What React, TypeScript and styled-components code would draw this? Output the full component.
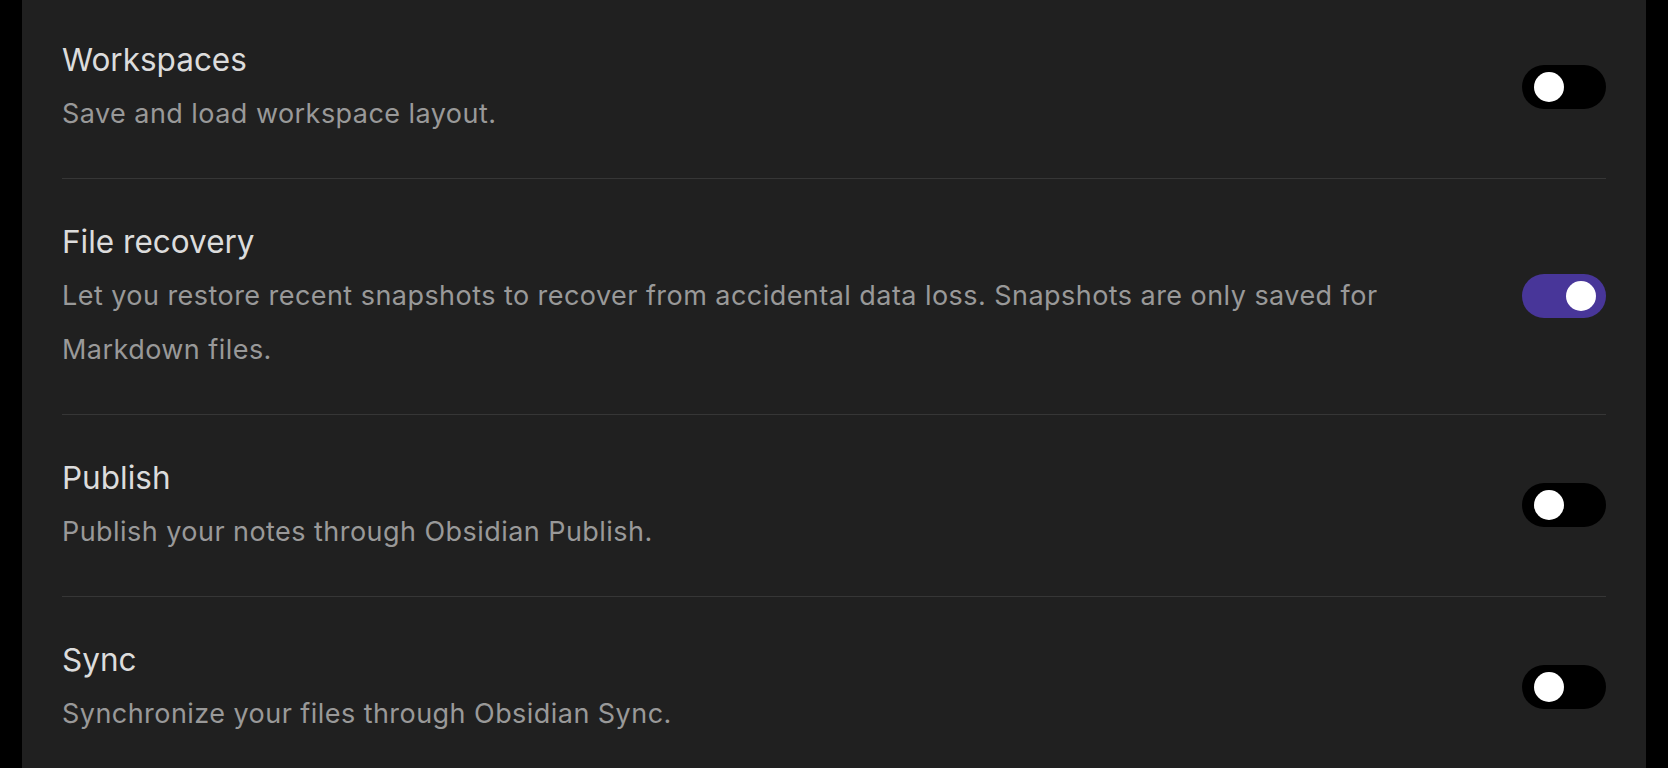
import React, { useState } from "react";
import styled, { createGlobalStyle } from "styled-components";

const GlobalStyle = createGlobalStyle`
  html, body {
    margin: 0;
    padding: 0;
    background: #000;
    height: 100%;
    overflow: hidden;
  }
  #root {
    height: 100%;
  }
`;

const Screen = styled.div`
  display: flex;
  justify-content: center;
  height: 768px;
  background: #000;
`;

const Panel = styled.div`
  width: 1624px;
  height: 100%;
  background: #202020;
  padding: 0 40px;
  box-sizing: border-box;
  overflow: hidden;
  font-family: Inter, "Noto Sans", sans-serif;
`;

const List = styled.div`
  display: flex;
  flex-direction: column;
`;

const Item = styled.div`
  display: flex;
  align-items: center;
  padding: 42px 0 37px;
  border-top: 1px solid #363636;

  &:first-child {
    border-top: none;
    padding-top: 39px;
  }
`;

const Info = styled.div`
  flex: 1 1 auto;
  margin-right: 40px;
  display: flex;
  flex-direction: column;
  gap: 6px;
`;

const Name = styled.div`
  font-size: 31.5px;
  line-height: 42px;
  color: #dcdcdc;
`;

const Description = styled.div`
  font-size: 27px;
  line-height: 54px;
  letter-spacing: 0.45px;
  color: #999999;
`;

const Track = styled.button<{ $on: boolean }>`
  flex: 0 0 auto;
  position: relative;
  width: 84px;
  height: 44px;
  border: none;
  padding: 0;
  margin-bottom: 6px;
  border-radius: 22px;
  background: ${(p) => (p.$on ? "#483699" : "#000000")};
  cursor: pointer;
`;

const Knob = styled.span<{ $on: boolean }>`
  position: absolute;
  top: 7px;
  left: ${(p) => (p.$on ? "44px" : "12px")};
  width: 30px;
  height: 30px;
  border-radius: 50%;
  background: #ffffff;
  transition: left 0.15s ease;
`;

interface ToggleProps {
  on: boolean;
  onClick: () => void;
}

const Toggle = ({ on, onClick }: ToggleProps) => (
  <Track $on={on} onClick={onClick} aria-pressed={on}>
    <Knob $on={on} />
  </Track>
);

const plugins = [
  {
    name: "Workspaces",
    desc: "Save and load workspace layout.",
    enabled: false,
  },
  {
    name: "File recovery",
    desc: "Let you restore recent snapshots to recover from accidental data loss. Snapshots are only saved for Markdown files.",
    enabled: true,
  },
  {
    name: "Publish",
    desc: "Publish your notes through Obsidian Publish.",
    enabled: false,
  },
  {
    name: "Sync",
    desc: "Synchronize your files through Obsidian Sync.",
    enabled: false,
  },
];

const App = () => {
  const [state, setState] = useState(plugins.map((p) => p.enabled));

  const flip = (i: number) =>
    setState((s) => s.map((v, j) => (j === i ? !v : v)));

  return (
    <>
      <GlobalStyle />
      <Screen>
        <Panel>
          <List>
            {plugins.map((p, i) => (
              <Item key={p.name}>
                <Info>
                  <Name>{p.name}</Name>
                  <Description>{p.desc}</Description>
                </Info>
                <Toggle on={state[i]} onClick={() => flip(i)} />
              </Item>
            ))}
          </List>
        </Panel>
      </Screen>
    </>
  );
};

export default App;
